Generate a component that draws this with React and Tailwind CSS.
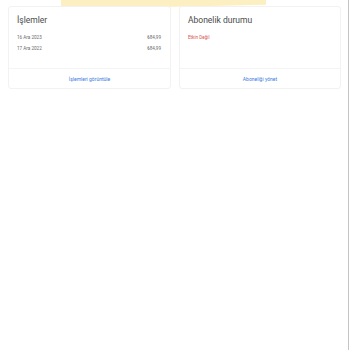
import React from "react";

const Card = ({ title, children, action }) => (
  <div className="flex h-[83px] flex-col rounded-[3px] border border-[#f2f2f2] bg-white">
    <div className="flex-1 px-[8px] pt-[7px]">
      <h2 className="text-[8.5px] leading-[12px] text-[#4a4a4a]">{title}</h2>
      {children}
    </div>
    <div className="flex h-[20px] items-center justify-center border-t border-[#f4f4f4] pt-[3px]">
      <span className="text-[5px] text-[#3b7be0]">{action}</span>
    </div>
  </div>
);

export default function App() {
  const rows = [
    { date: "16 Ara 2023", amount: "₺84,99" },
    { date: "17 Ara 2022", amount: "₺84,99" },
  ];

  return (
    <div
      className="relative h-[350px] w-[350px] overflow-hidden bg-white"
      style={{ fontFamily: "Roboto, 'Noto Sans', sans-serif" }}
    >
      {/* yellow banner edge */}
      <div className="absolute left-[61px] top-[-5px] h-[12px] w-[205px] -rotate-[1.3deg] bg-[#fcefc2]" />

      <div className="relative flex w-[348px] gap-[8px] pl-[8px] pr-[7px] pt-[6px]">
        <div className="w-[163px]">
          <Card title="İşlemler" action="İşlemleri görüntüle">
            <div className="mt-[9px] flex flex-col gap-[5px] pr-[1px] text-[4.6px] leading-[6px] text-[#6b6b6b]">
              {rows.map((r) => (
                <div key={r.date} className="flex justify-between">
                  <span>{r.date}</span>
                  <span>{r.amount}</span>
                </div>
              ))}
            </div>
          </Card>
        </div>
        <div className="flex-1">
          <Card title="Abonelik durumu" action="Aboneliği yönet">
            <div className="mt-[9px] text-[4.6px] leading-[6px] text-[#d9534f]">Etkin Değil</div>
          </Card>
        </div>
      </div>

      {/* page edge */}
      <div className="absolute right-[1px] top-0 h-full w-[1px] bg-[#c4c4c4]" />
    </div>
  );
}
